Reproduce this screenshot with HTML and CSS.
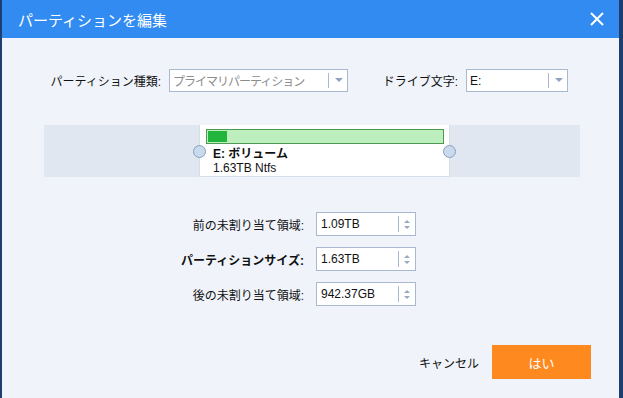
FILE: index.html
```html
<!DOCTYPE html>
<html lang="ja">
<head>
  <meta charset="UTF-8">
  <title>パーティションを編集</title>
  <link rel="stylesheet" href="styles.css">
</head>
<body>
  <div class="Dialog">
    <header class="TitleBar">
      <h1>パーティションを編集</h1>
      <svg class="closeIcon" width="14" height="14" viewBox="0 0 14 14">
        <path d="M1 1 L13 13 M13 1 L1 13" stroke="#fff" stroke-width="2" fill="none"/>
      </svg>
    </header>

    <div class="TypeRow">
      <label class="typeLabel">パーティション種類:</label>
      <div class="select wide">
        <span class="selText muted">プライマリパーティション</span>
        <span class="selArrow"></span>
      </div>
      <label class="letterLabel">ドライブ文字:</label>
      <div class="select narrow">
        <span class="selText">E:</span>
        <span class="selArrow"></span>
      </div>
    </div>

    <div class="Band">
      <div class="part">
        <span class="handle left"></span>
        <div class="usage"><div class="used"></div></div>
        <p class="partName">E: ボリューム</p>
        <p class="partInfo">1.63TB Ntfs</p>
        <span class="handle right"></span>
      </div>
    </div>

    <div class="SizeRows">
      <div class="sizeRow">
        <label>前の未割り当て領域:</label>
        <div class="spin"><span class="spinText">1.09TB</span><span class="spinBtn"><i class="up"></i><i class="down"></i></span></div>
      </div>
      <div class="sizeRow">
        <label class="strong">パーティションサイズ:</label>
        <div class="spin"><span class="spinText">1.63TB</span><span class="spinBtn"><i class="up"></i><i class="down"></i></span></div>
      </div>
      <div class="sizeRow">
        <label>後の未割り当て領域:</label>
        <div class="spin"><span class="spinText">942.37GB</span><span class="spinBtn"><i class="up"></i><i class="down"></i></span></div>
      </div>
    </div>

    <div class="Bottom">
      <span class="cancel">キャンセル</span>
      <button class="ok">はい</button>
    </div>
  </div>
</body>
</html>
```

FILE: styles.css
```css
* {
  box-sizing: border-box;
}

body {
  margin: 0;
  background-color: #1b3f6e;
  font-family: "Liberation Sans", "Noto Sans CJK JP", sans-serif;
  font-size: 12px;
  color: #111;
}

.Dialog {
  width: 617px;
  height: 398px;
  margin-left: 2px;
  background-color: #f0f4fa;
  display: flex;
  flex-direction: column;
}

.TitleBar {
  height: 38px;
  background-color: #318bf0;
  display: flex;
  align-items: center;
  justify-content: space-between;
  padding: 0 15px 0 16px;
}

.TitleBar h1 {
  margin: 0;
  font-size: 15px;
  font-weight: normal;
  color: #fff;
}

.TypeRow {
  display: flex;
  align-items: center;
  margin-top: 31px;
  padding-left: 48px;
}

.typeLabel, .letterLabel {
  width: 111px;
  text-align: right;
  margin-right: 8px;
}

.letterLabel {
  width: 110px;
}

.select {
  height: 23px;
  border: 1px solid #a9b9d1;
  background-color: #fff;
  display: flex;
  align-items: center;
}

.wide {
  width: 179px;
}

.narrow {
  width: 102px;
}

.selText {
  flex: 1;
  padding-left: 3px;
}

.muted {
  color: #8c8c8c;
  letter-spacing: -1px;
}

.selArrow {
  width: 19px;
  height: 15px;
  border-left: 1px solid #a9b9d1;
  position: relative;
}

.selArrow::after {
  content: "";
  position: absolute;
  left: 6px;
  top: 5px;
  border-left: 4px solid transparent;
  border-right: 4px solid transparent;
  border-top: 4px solid #8fa3c1;
}

.Band {
  margin: 33px 0 0 42px;
  width: 536px;
  height: 52px;
  background-color: #e1e7f0;
  padding-left: 155px;
}

.part {
  position: relative;
  width: 251px;
  height: 52px;
  background-color: #fff;
  border: 1px solid #d6dee9;
  border-top: none;
  padding: 4px 0 0 6px;
}

.usage {
  width: 238px;
  height: 15px;
  border: 1px solid #4f9a52;
  background-color: #bdeebd;
  padding: 1px;
}

.used {
  width: 19px;
  height: 11px;
  background-color: #22b53b;
}

.partName {
  margin: 3px 0 0 7px;
  font-weight: bold;
  line-height: 14px;
}

.partInfo {
  margin: 0 0 0 7px;
  line-height: 14px;
}

.handle {
  position: absolute;
  top: 20px;
  width: 13px;
  height: 13px;
  border-radius: 50%;
  background-color: #c9d9ee;
  border: 1px solid #8a9fbd;
}

.left {
  left: -7px;
}

.right {
  right: -7px;
}

.SizeRows {
  margin-top: 35px;
  display: flex;
  flex-direction: column;
  gap: 11px;
}

.sizeRow {
  display: flex;
  align-items: center;
}

.sizeRow label {
  width: 306px;
  padding-right: 4px;
  text-align: right;
}

.strong {
  font-weight: bold;
}

.spin {
  margin-left: 8px;
  width: 100px;
  height: 24px;
  border: 1px solid #a9b9d1;
  background-color: #fff;
  display: flex;
  align-items: center;
}

.spinText {
  flex: 1;
  padding-left: 4px;
}

.spinBtn {
  width: 17px;
  height: 16px;
  border-left: 1px solid #a9b9d1;
  display: flex;
  flex-direction: column;
  align-items: center;
  justify-content: center;
  gap: 3px;
}

.spinBtn i {
  display: block;
  border-left: 3px solid transparent;
  border-right: 3px solid transparent;
}

.up {
  border-bottom: 3px solid #9aaac2;
}

.down {
  border-top: 3px solid #9aaac2;
}

.Bottom {
  margin-top: auto;
  margin-bottom: 19px;
  display: flex;
  align-items: center;
  justify-content: flex-end;
  padding-right: 28px;
}

.cancel {
  font-size: 12px;
  margin-right: 13px;
}

.ok {
  width: 99px;
  height: 34px;
  border: none;
  background-color: #fd891f;
  color: #fff;
  font-family: inherit;
  font-size: 13px;
}
```
